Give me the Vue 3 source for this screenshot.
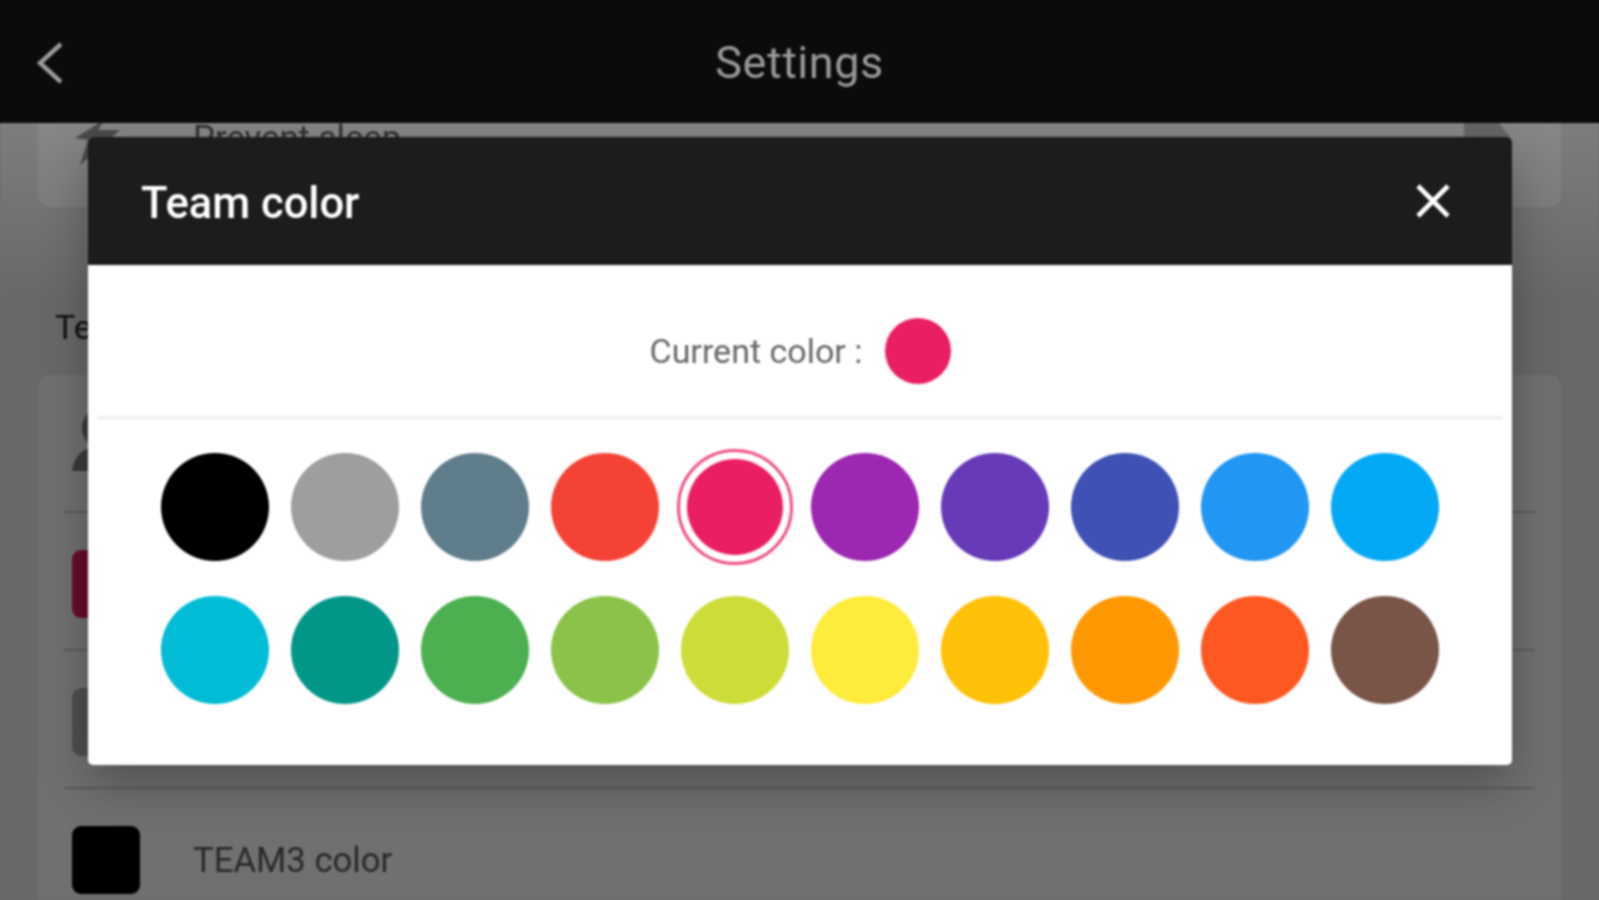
<script setup>
const rows = [
  ['#000000', '#9E9E9E', '#607D8B', '#F44336', '#E91E63', '#9C27B0', '#673AB7', '#3F51B5', '#2196F3', '#03A9F4'],
  ['#00BCD4', '#009688', '#4CAF50', '#8BC34A', '#CDDC39', '#FFEB3B', '#FFC107', '#FF9800', '#FF5722', '#795548']
]
const colors = rows.flat()
const current = '#E91E63'
const teams = [
  { name: 'TEAM1 color', color: '#E91E63' },
  { name: 'TEAM2 color', color: '#B4B4B4' },
  { name: 'TEAM3 color', color: '#000000' }
]
</script>

<template>
  <div class="app">
    <header class="topbar">
      <svg class="back" viewBox="0 0 26 42" width="26" height="42" aria-hidden="true">
        <path d="M24 2 L3 21 L24 40" fill="none" stroke="#9a9a9a" stroke-width="4.4" />
      </svg>
      <h1 class="topbar-title">Settings</h1>
    </header>

    <main class="page">
      <div class="page-inner">
        <section class="card">
          <div class="row row-first">
            <svg class="row-icon" viewBox="0 0 68 64" width="68" height="64" aria-hidden="true">
              <polygon points="32,14 3,32 16,34 8,59 48,24 26,24" fill="#8e8e8e" />
            </svg>
            <span class="row-text">Prevent sleep</span>
            <svg class="toggle" viewBox="0 0 46 40" width="46" height="40" aria-hidden="true">
              <polygon points="0,0 31,0 46,19 46,40 0,40" fill="#c0c0c0" />
            </svg>
          </div>
        </section>

        <p class="section-label">Team settings</p>

        <section class="card">
          <div class="row row-first row-short">
            <svg class="row-icon" viewBox="0 0 68 64" width="68" height="64" aria-hidden="true">
              <circle cx="32" cy="17" r="22" fill="#848484" />
              <path d="M0 60 C2 42 16 34 32 34 C48 34 62 42 64 60 Z" fill="#848484" />
            </svg>
            <span class="row-text">Team name</span>
          </div>
          <div v-for="t in teams" :key="t.name" class="row">
            <span class="team-swatch" :style="{ background: t.color }"></span>
            <span class="row-text">{{ t.name }}</span>
          </div>
        </section>
      </div>
    </main>

    <div class="scrim"></div>

    <div class="modal">
      <div class="modal-head">
        <span class="modal-title">Team color</span>
        <svg class="close" viewBox="0 0 34 34" width="34" height="34" aria-hidden="true">
          <path d="M2 2 L32 32 M32 2 L2 32" stroke="#fff" stroke-width="4.6" fill="none" />
        </svg>
      </div>
      <div class="current">
        <span class="current-label">Current color :</span>
        <span class="current-dot" :style="{ background: current }"></span>
      </div>
      <div class="divider"></div>
      <div class="grid">
        <div v-for="c in colors" :key="c" class="cell">
          <span v-if="c === current" class="ring">
            <span class="dot-selected" :style="{ background: c }"></span>
          </span>
          <span v-else class="dot" :style="{ background: c }"></span>
        </div>
      </div>
    </div>
  </div>
</template>

<style>
html, body {
  margin: 0;
  height: 100%;
  overflow: hidden;
}
html {
  background: linear-gradient(to bottom, #0b0b0b 123px, #6a6a6a 123px);
}
</style>

<style scoped>
.app {
  position: relative;
  width: 1599px;
  height: 900px;
  overflow: hidden;
  font-family: Roboto, "Liberation Sans", sans-serif;
  background: #ececec;
  filter: blur(0.9px);
}
.topbar {
  position: relative;
  z-index: 3;
  height: 123px;
  background: #0b0b0b;
  display: flex;
  align-items: center;
  justify-content: center;
}
.back {
  position: absolute;
  left: 37px;
  top: 42px;
}
.topbar-title {
  margin: 2px 0 0;
  font-size: 45px;
  font-weight: 400;
  color: #9a9a9a;
  letter-spacing: 0.5px;
}
.page {
  height: 777px;
  overflow: hidden;
  padding: 0 38px;
}
.page-inner {
  margin-top: -54px;
}
.card {
  background: #fff;
  border-radius: 12px;
  padding: 0 26px;
}
.row {
  height: 138px;
  box-sizing: border-box;
  display: flex;
  align-items: center;
  padding-top: 5px;
  border-top: 2px solid #cfcfcf;
}
.row-first {
  border-top: 0;
  padding-top: 0;
}
.row-short { height: 136px; }
.row-icon {
  margin-left: 8px;
  flex: none;
}
.team-swatch {
  width: 68px;
  height: 68px;
  margin-left: 8px;
  border-radius: 9px;
  flex: none;
}
.row-text {
  margin-left: 53px;
  font-size: 34.7px;
  color: #5c5c5c;
}
.toggle {
  margin-left: auto;
  margin-right: 25px;
}
.section-label {
  margin: 0;
  height: 168px;
  box-sizing: border-box;
  padding: 99px 0 0 17px;
  font-size: 34px;
  line-height: 42px;
  font-weight: 400;
  color: #222;
}
.scrim {
  position: absolute;
  left: 0;
  right: 0;
  top: 123px;
  bottom: 0;
  background: linear-gradient(to bottom, rgba(0, 0, 0, 0.47) 0, rgba(0, 0, 0, 0.56) 180px, rgba(0, 0, 0, 0.56) 100%);
}
.modal {
  position: absolute;
  left: 88px;
  top: 137px;
  width: 1424px;
  border-radius: 5px;
  overflow: hidden;
  background: #fff;
  box-shadow: 0 20px 50px rgba(0, 0, 0, 0.28);
}
.modal-head {
  height: 128px;
  background: #1a1c1e;
  display: flex;
  align-items: center;
  justify-content: space-between;
  padding: 0 62px 0 53px;
}
.modal-title {
  margin-top: 4px;
  font-size: 43.5px;
  font-weight: 500;
  color: #fff;
}
.current {
  display: flex;
  align-items: center;
  justify-content: center;
  gap: 22px;
  padding: 53px 0 32px;
}
.current-label {
  font-size: 34px;
  color: #666;
}
.current-dot {
  width: 66px;
  height: 66px;
  border-radius: 50%;
}
.divider {
  height: 3px;
  margin: 0 10px;
  background: #eeeeee;
}
.grid {
  display: grid;
  grid-template-columns: repeat(10, 130px);
  grid-auto-rows: 143px;
  padding: 16px 62px 44px;
}
.cell {
  display: flex;
  align-items: center;
  justify-content: center;
}
.dot {
  width: 108px;
  height: 108px;
  border-radius: 50%;
}
.ring {
  width: 116px;
  height: 116px;
  box-sizing: border-box;
  border: 3px solid #ef4f85;
  border-radius: 50%;
  display: flex;
  align-items: center;
  justify-content: center;
}
.dot-selected {
  width: 96px;
  height: 96px;
  border-radius: 50%;
}
</style>
